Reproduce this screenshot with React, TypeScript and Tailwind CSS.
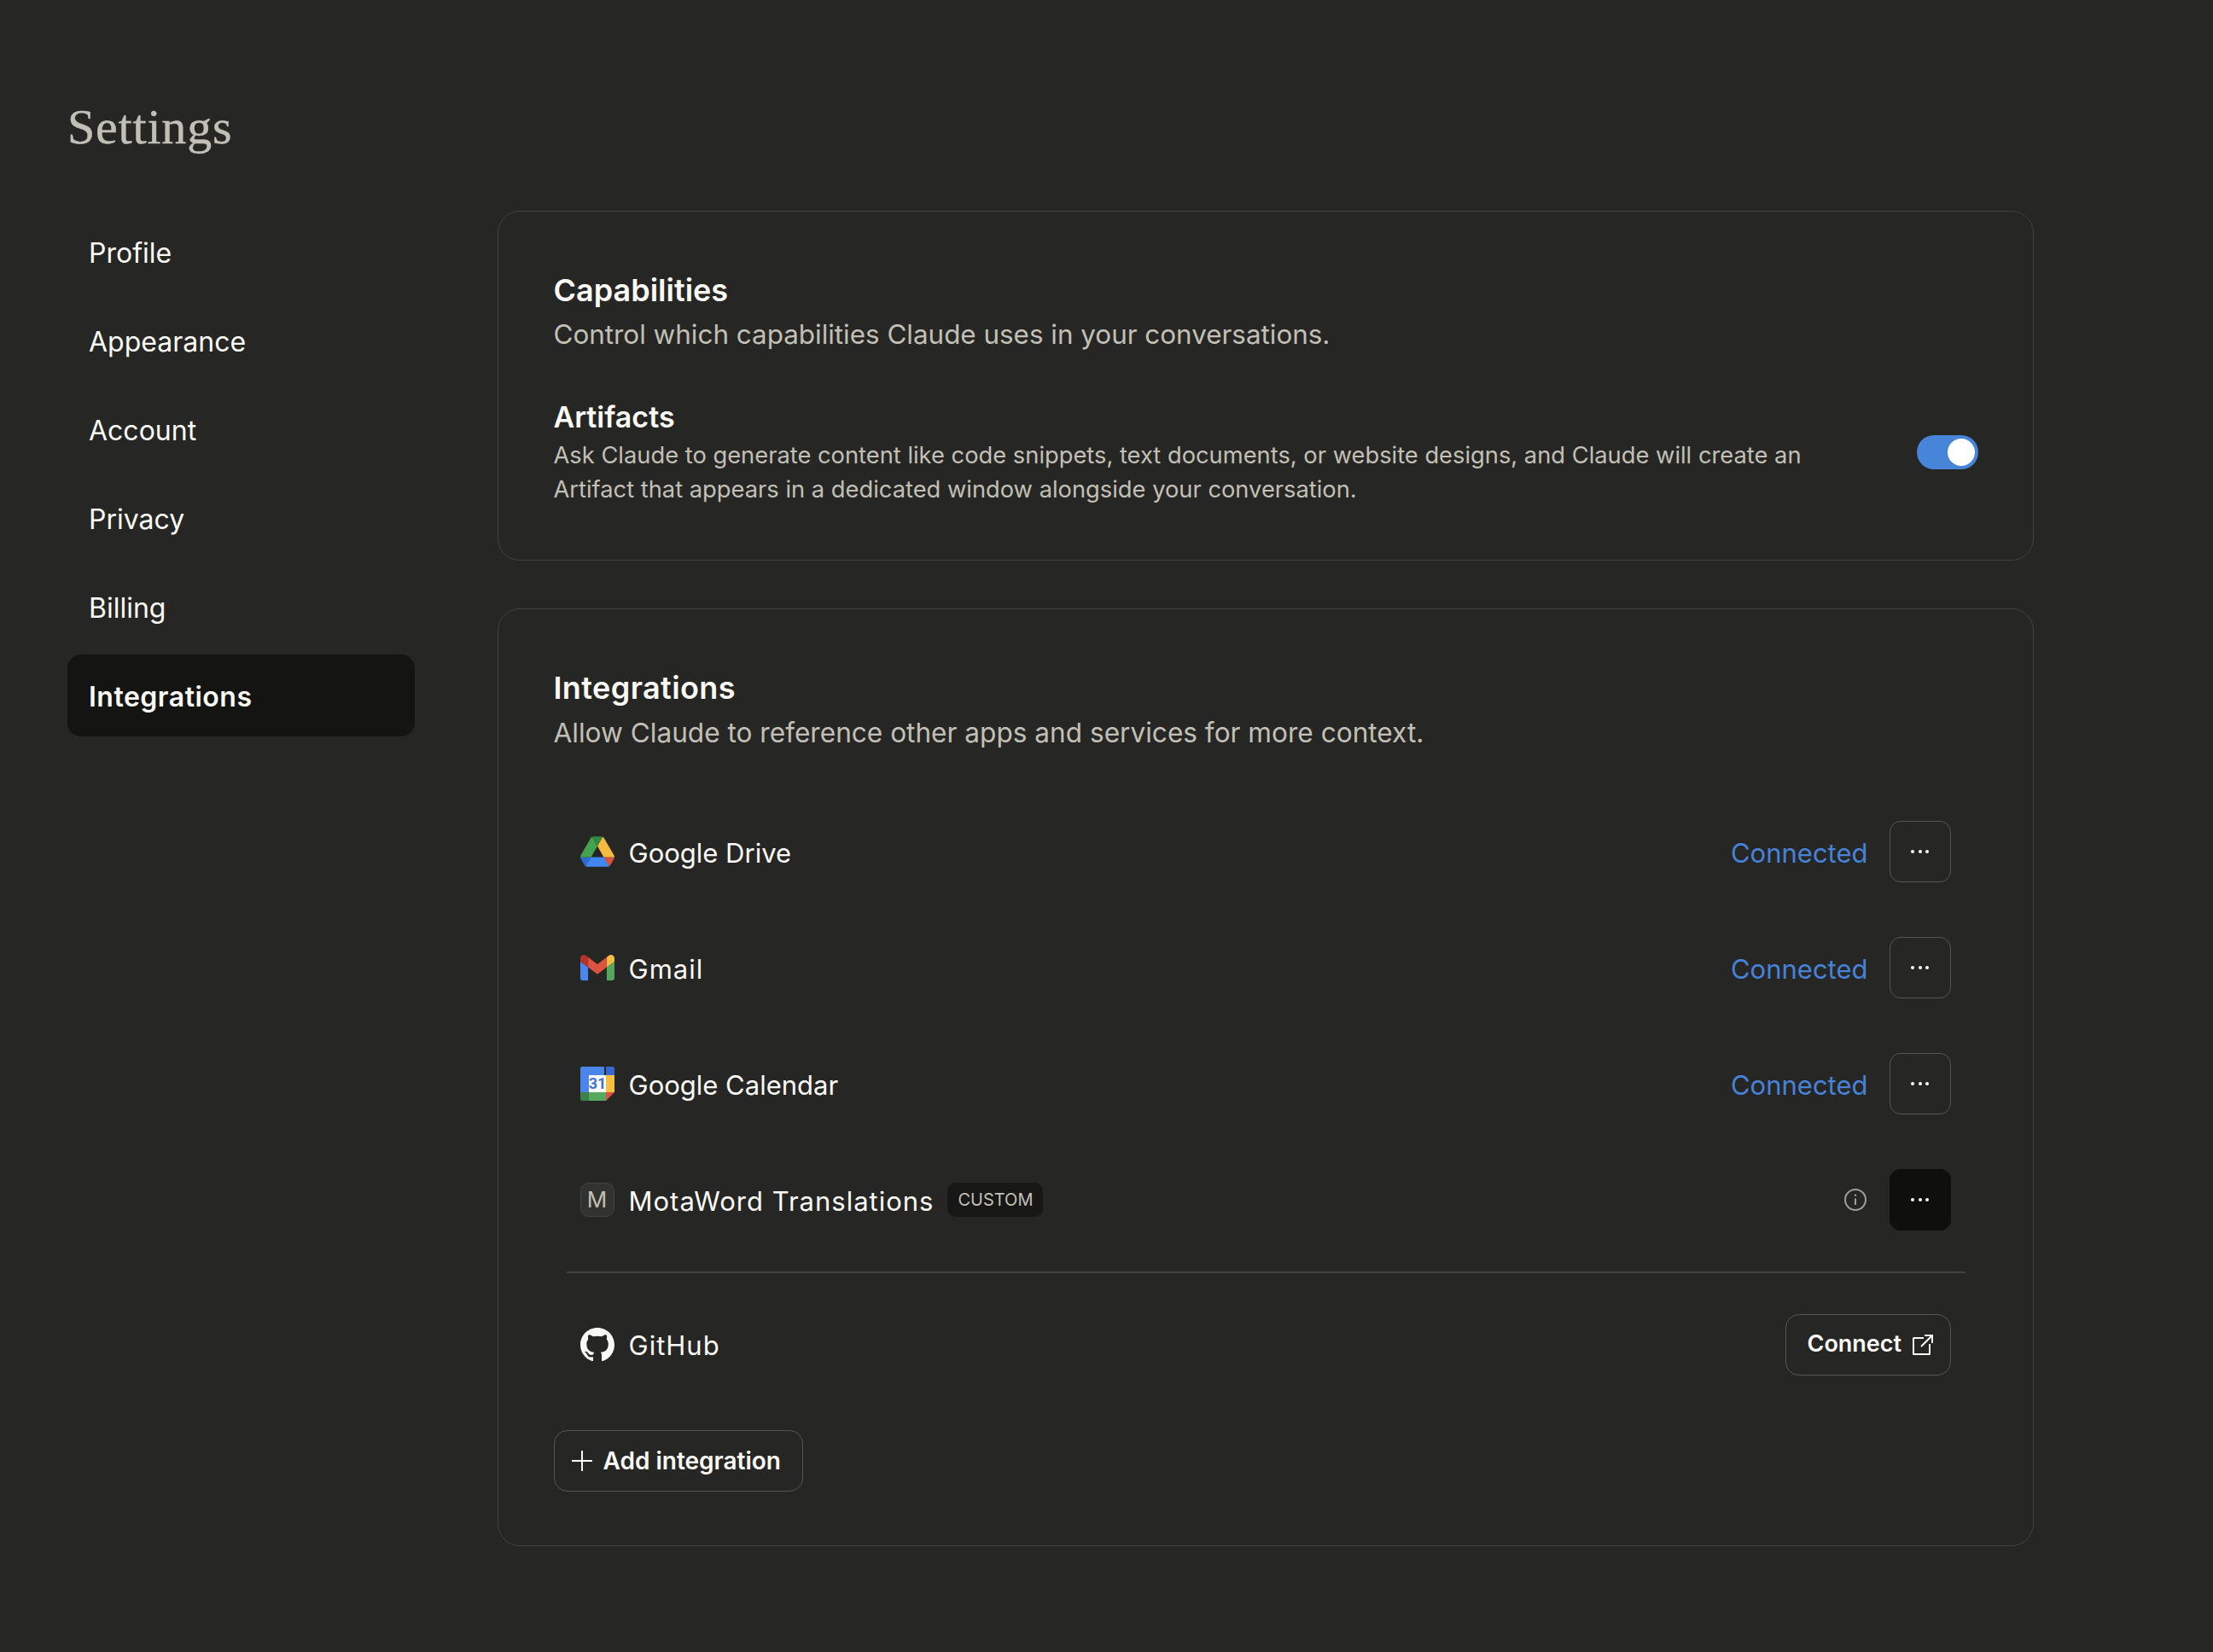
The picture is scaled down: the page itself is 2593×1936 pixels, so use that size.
import type { ReactNode } from "react";

const navItems = ["Profile", "Appearance", "Account", "Privacy", "Billing", "Integrations"];

function DriveIcon() {
  return (
    <svg viewBox="0 0 87.3 78" className="h-9 w-10" aria-hidden>
      <path d="m6.6 66.85 3.85 6.65c.8 1.4 1.95 2.5 3.3 3.3l13.75-23.8h-27.5c0 1.55.4 3.1 1.2 4.5z" fill="#2b6cd4" />
      <path d="m43.65 25-13.75-23.8c-1.35.8-2.5 1.9-3.3 3.3l-25.4 44a9.06 9.06 0 0 0 -1.2 4.5h27.5z" fill="#43a34e" />
      <path d="m73.55 76.8c1.35-.8 2.5-1.9 3.3-3.3l1.6-2.75 7.65-13.25c.8-1.4 1.2-2.95 1.2-4.5h-27.502l5.852 11.5z" fill="#db5140" />
      <path d="m43.65 25 13.75-23.8c-1.35-.8-2.9-1.2-4.5-1.2h-18.5c-1.6 0-3.15.45-4.5 1.2z" fill="#2f8a3e" />
      <path d="m59.8 53h-32.3l-13.75 23.8c1.35.8 2.9 1.2 4.5 1.2h50.8c1.6 0 3.15-.45 4.5-1.2z" fill="#4187f2" />
      <path d="m73.4 26.5-12.7-22c-.8-1.4-1.95-2.5-3.3-3.3l-13.75 23.8 16.15 28h27.45c0-1.55-.4-3.1-1.2-4.5z" fill="#f6ba3e" />
    </svg>
  );
}

function GmailIcon() {
  return (
    <svg viewBox="52 42 88 66" className="h-[30px] w-10" aria-hidden>
      <path fill="#4a86ee" d="M58 108h14V74L52 59v43c0 3.32 2.69 6 6 6" />
      <path fill="#55a75e" d="M120 108h14c3.32 0 6-2.69 6-6V59l-20 15" />
      <path fill="#f6bd41" d="M120 48v26l20-15v-8c0-7.42-8.47-11.65-14.4-7.2" />
      <path fill="#dd5241" d="M72 74V48l24 18 24-18v26L96 92" />
      <path fill="#b53327" d="M52 51v8l20 15V48l-5.6-4.2c-5.94-4.45-14.4-.22-14.4 7.2" />
    </svg>
  );
}

function CalendarIcon() {
  return (
    <svg viewBox="0 0 40 40" className="h-10 w-10" aria-hidden>
      <path d="M2 0h26v10H10v20H0V2a2 2 0 0 1 2-2z" fill="#4a86ea" />
      <path d="M30 0h8a2 2 0 0 1 2 2v8H30z" fill="#3568d0" />
      <rect x="30" y="10" width="10" height="20" fill="#f5bf42" />
      <path d="M0 30h10v10H2a2 2 0 0 1-2-2z" fill="#3d8049" />
      <rect x="10" y="30" width="20" height="10" fill="#57a95f" />
      <path d="M30 30h10L30 40z" fill="#dc5241" />
      <rect x="10" y="10" width="20" height="20" fill="#ffffff" />
      <text x="20" y="26.3" textAnchor="middle" fontSize="18" fontWeight="700" fontFamily="Roboto, sans-serif" fill="#3e73d6">
        31
      </text>
    </svg>
  );
}

function GithubIcon() {
  return (
    <svg viewBox="0 0 16 16" className="h-10 w-10" fill="#faf9f5" aria-hidden>
      <path d="M8 0C3.58 0 0 3.58 0 8c0 3.54 2.29 6.53 5.47 7.59.4.07.55-.17.55-.38 0-.19-.01-.82-.01-1.49-2.01.37-2.53-.49-2.69-.94-.09-.23-.48-.94-.82-1.13-.28-.15-.68-.52-.01-.53.63-.01 1.08.58 1.23.82.72 1.21 1.87.87 2.33.66.07-.52.28-.87.51-1.07-1.78-.2-3.64-.89-3.64-3.95 0-.87.31-1.59.82-2.15-.08-.2-.36-1.02.08-2.12 0 0 .67-.21 2.2.82.64-.18 1.32-.27 2-.27.68 0 1.36.09 2 .27 1.53-1.04 2.2-.82 2.2-.82.44 1.1.16 1.92.08 2.12.51.56.82 1.27.82 2.15 0 3.07-1.87 3.75-3.65 3.95.29.25.54.73.54 1.48 0 1.07-.01 1.93-.01 2.2 0 .21.15.46.55.38A8.013 8.013 0 0016 8c0-4.42-3.58-8-8-8z" />
    </svg>
  );
}

function CustomIcon() {
  return (
    <div className="flex h-10 w-10 items-center justify-center rounded-[10px] border-[1.5px] border-[#454542] bg-[#32322f] text-[26px] leading-none text-[#c2c0b6]">
      M
    </div>
  );
}

function InfoIcon() {
  return (
    <svg viewBox="0 0 26 26" className="h-[26px] w-[26px]" fill="none" stroke="#a09e94" strokeWidth="2" aria-hidden>
      <circle cx="13" cy="13" r="12" />
      <path d="M13 11.5v7.5" />
      <circle cx="13" cy="7.8" r="1.2" fill="#a09e94" stroke="none" />
    </svg>
  );
}

function MoreButton({ active }: { active?: boolean }) {
  return (
    <button
      className={
        active
          ? "flex h-[72px] w-[72px] items-center justify-center gap-[4.7px] rounded-[13px] bg-[#0f0f0e]"
          : "flex h-[72px] w-[72px] items-center justify-center gap-[4.7px] rounded-[13px] border-[1.5px] border-[#565652]"
      }
    >
      <span className="h-1 w-1 rounded-full bg-[#faf9f5]" />
      <span className="h-1 w-1 rounded-full bg-[#faf9f5]" />
      <span className="h-1 w-1 rounded-full bg-[#faf9f5]" />
    </button>
  );
}

function Connected() {
  return <span className="pt-[2px] text-[31px] leading-none text-[#4683d8]">Connected</span>;
}

function Row({ icon, name, children }: { icon: ReactNode; name: ReactNode; children: ReactNode }) {
  return (
    <div className="flex h-[72px] items-center justify-between pl-[31px] pr-[32px]">
      <div className="flex items-center gap-[17px]">
        <div className="flex w-10 shrink-0 items-center justify-center">{icon}</div>
        {name}
      </div>
      <div className="flex items-center">{children}</div>
    </div>
  );
}

function RowName({ wide, children }: { wide?: boolean; children: ReactNode }) {
  return (
    <span
      className={
        wide
          ? "inline-block pt-[2px] text-[31px] leading-none tracking-[1px] text-[#faf9f5]"
          : "inline-block pt-[2px] text-[31px] leading-none text-[#faf9f5]"
      }
    >
      {children}
    </span>
  );
}

export default function App() {
  return (
    <div className="min-h-[1936px] bg-[#262624] pl-[79px] pt-[112px] font-[Inter,sans-serif]">
      <h1 className="h-[74px] font-['Liberation_Serif',serif] text-[58px] leading-[74px] tracking-[0.8px] text-[#c2c0b6] [-webkit-text-stroke:0.4px_#c2c0b6]">
        Settings
      </h1>

      <div className="mt-[61px] flex items-start gap-[97px]">
        <nav className="flex w-[407px] flex-col gap-2">
          {navItems.map((item) => (
            <a
              key={item}
              className={
                item === "Integrations"
                  ? "flex h-24 items-center rounded-2xl bg-[#141413] px-[25px] pt-[3px] text-[32px] font-semibold tracking-[0.5px] text-[#faf9f5]"
                  : "flex h-24 items-center rounded-2xl px-[25px] pt-[3px] text-[32px] text-[#faf9f5]"
              }
            >
              {item}
            </a>
          ))}
        </nav>

        <main className="flex w-[1800px] flex-col gap-14">
          <section className="h-[410px] rounded-[26px] border-[1.5px] border-[#424240] px-[64.5px] pt-[66px]">
            <h2 className="text-[36px] font-semibold leading-[52px] text-[#faf9f5]">Capabilities</h2>
            <p className="text-[31.4px] leading-[53px] text-[#c2c0b6]">
              Control which capabilities Claude uses in your conversations.
            </p>
            <div className="mt-[46px] flex items-center justify-between">
              <div className="w-[1500px]">
                <h3 className="text-[34px] font-semibold leading-[48px] text-[#faf9f5]">Artifacts</h3>
                <p className="pt-[1px] text-[27.3px] leading-10 text-[#c2c0b6]">
                  Ask Claude to generate content like code snippets, text documents, or website designs, and Claude will create an Artifact that appears in a dedicated window alongside your conversation.
                </p>
              </div>
              <div className="flex h-10 w-[72px] items-center justify-end rounded-full bg-[#4785d9] pr-1">
                <div className="h-8 w-8 rounded-full bg-white" />
              </div>
            </div>
          </section>

          <section className="h-[1099px] rounded-[26px] border-[1.5px] border-[#424240] px-[64.5px] pt-[66px]">
            <h2 className="text-[36px] font-semibold leading-[52px] tracking-[0.4px] text-[#faf9f5]">Integrations</h2>
            <p className="text-[31.6px] leading-[53px] text-[#c2c0b6]">
              Allow Claude to reference other apps and services for more context.
            </p>

            <div className="mt-[77px] flex flex-col gap-16">
              <Row icon={<DriveIcon />} name={<RowName>Google Drive</RowName>}>
                <Connected />
                <span className="w-[25px]" />
                <MoreButton />
              </Row>
              <Row icon={<GmailIcon />} name={<RowName wide>Gmail</RowName>}>
                <Connected />
                <span className="w-[25px]" />
                <MoreButton />
              </Row>
              <Row icon={<CalendarIcon />} name={<RowName>Google Calendar</RowName>}>
                <Connected />
                <span className="w-[25px]" />
                <MoreButton />
              </Row>
              <Row
                icon={<CustomIcon />}
                name={
                  <div className="flex items-center gap-[16px]">
                    <RowName wide>MotaWord Translations</RowName>
                    <span className="flex h-10 items-center rounded-[10px] bg-[#171716] px-[12px] text-[20px] text-[#c2c0b6]">
                      CUSTOM
                    </span>
                  </div>
                }
              >
                <InfoIcon />
                <span className="w-[27px]" />
                <MoreButton active />
              </Row>
            </div>

            <div className="mx-[15px] my-12 h-[1.5px] bg-[#424240]" />

            <Row icon={<GithubIcon />} name={<RowName wide>GitHub</RowName>}>
              <button className="flex h-[72px] w-[194px] items-center gap-[13px] rounded-[16px] border-[1.5px] border-[#565652] pl-[25px] text-[27px] font-semibold text-[#faf9f5]">
                Connect
                <svg viewBox="0 0 24 24" className="h-6 w-6" fill="none" stroke="#faf9f5" strokeWidth="2" aria-hidden>
                  <path d="M13 4H1.5a.5.5 0 0 0-.5.5v18a.5.5 0 0 0 .5.5h18a.5.5 0 0 0 .5-.5V11" />
                  <path d="M10 14L23 1M14 1h9v9" />
                </svg>
              </button>
            </Row>

            <button className="mt-16 flex h-[72px] w-[292px] items-center gap-[13px] rounded-[16px] border-[1.5px] border-[#565652] pl-[20px] text-[28px] font-semibold text-[#faf9f5]">
              <svg viewBox="0 0 24 24" className="h-6 w-6" fill="none" stroke="#faf9f5" strokeWidth="2" aria-hidden>
                <path d="M12 0v24M0 12h24" />
              </svg>
              Add integration
            </button>
          </section>
        </main>
      </div>
    </div>
  );
}
